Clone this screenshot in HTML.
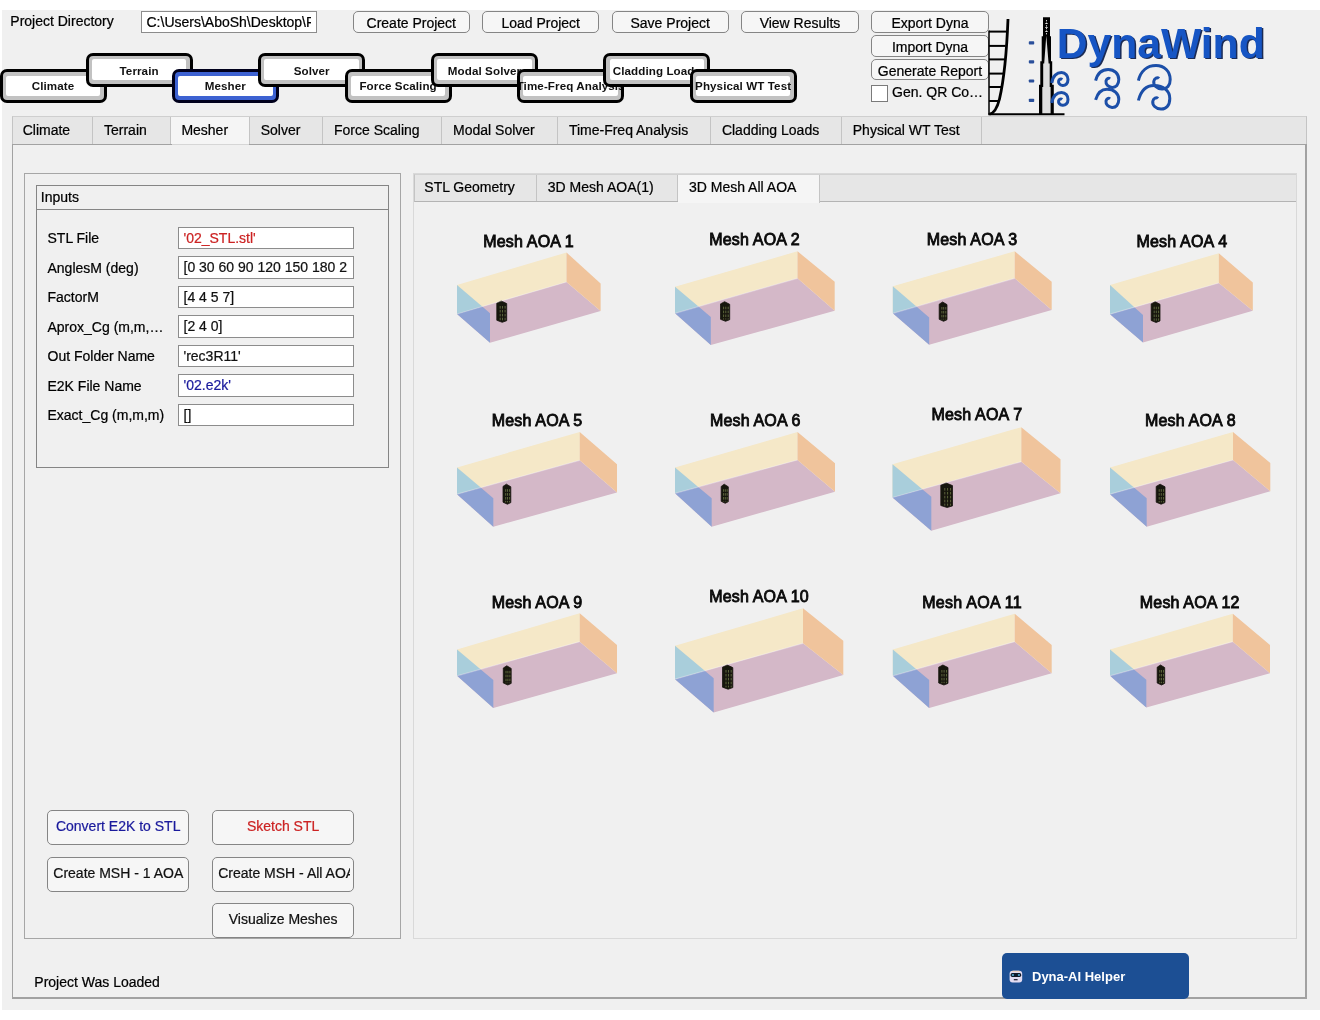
<!DOCTYPE html>
<html lang="en"><head><meta charset="utf-8"><title>DynaWind</title>
<style>
html,body{margin:0;padding:0;background:#fff;}
body{width:1320px;height:1020px;position:relative;overflow:hidden;font-family:"Liberation Sans",Arial,sans-serif;font-size:14px;color:#000;-webkit-text-stroke:0.22px currentColor;}
.a{position:absolute;box-sizing:border-box;white-space:nowrap;}
#bg{left:1.5px;top:10px;width:1318.5px;height:1000px;background:#f0f0f0;}
.t{line-height:16px;height:16px;}
.btn{border:1px solid #858585;border-radius:5px;background:#f6f6f6;text-align:center;overflow:hidden;}
.edit{border:1px solid #8c8c8c;background:#fff;overflow:hidden;padding-left:5px;}
.nav{border:3px solid #000;border-radius:7px;background:#c2c2c2;overflow:hidden;}
.nav i{position:absolute;left:3.2px;top:3.7px;right:3.2px;bottom:3.7px;background:#fff;border-radius:2px;}
.nav b{-webkit-text-stroke:0;position:absolute;left:0;right:0;top:1.6px;bottom:0;overflow:hidden;display:flex;align-items:center;justify-content:center;font-size:11.6px;letter-spacing:0.1px;font-weight:bold;font-style:normal;color:#111;}
.nav.sel{border-color:#00001c;background:#3d62d2;}
.tabbar{background:#e6e6e6;}
.tab{border-right:1px solid #c4c4c4;height:100%;top:0;}
.tabsel{background:#f5f5f5;}
#root{left:0;top:0;width:1320px;height:1020px;will-change:transform;}
</style></head><body>
<div class="a" id="root">
<div class="a" id="bg"></div>
<div class="a t" style="left:10.3px;top:12.8px;">Project Directory</div>
<div class="a edit" style="left:140.5px;top:11px;width:176.5px;height:21.5px;line-height:20px;"><span style="display:block;width:164px;overflow:hidden;">C:\Users\AboSh\Desktop\Projects</span></div>
<div class="a btn" style="left:352.7px;top:11.3px;width:117.2px;height:21.5px;line-height:23.5px;">Create Project</div>
<div class="a btn" style="left:482.1px;top:11.3px;width:117.2px;height:21.5px;line-height:23.5px;">Load Project</div>
<div class="a btn" style="left:611.6px;top:11.3px;width:117.2px;height:21.5px;line-height:23.5px;">Save Project</div>
<div class="a btn" style="left:741.4px;top:11.3px;width:117.2px;height:21.5px;line-height:23.5px;">View Results</div>
<div class="a btn" style="left:871px;top:11.3px;width:118px;height:21.5px;line-height:23.5px;">Export Dyna</div>
<div class="a btn" style="left:871px;top:35px;width:118px;height:21.5px;line-height:23.5px;">Import Dyna</div>
<div class="a btn" style="left:871px;top:58.5px;width:118px;height:21.5px;line-height:23.5px;">Generate Report</div>
<div class="a" style="left:871px;top:85.4px;width:16.6px;height:16.6px;border:1px solid #7a7a7a;background:#fff;"></div>
<div class="a t" style="left:892px;top:83.6px;">Gen. QR Co…</div>
<div class="a nav" style="left:-0.5px;top:69px;width:107px;height:34px;"><i></i><b style="top:-0.6px">Climate</b></div>
<div class="a nav" style="left:85.6px;top:52.8px;width:107px;height:34px;"><i></i><b style="top:1.6px">Terrain</b></div>
<div class="a nav sel" style="left:171.8px;top:69px;width:107px;height:34px;"><i></i><b style="top:-0.6px">Mesher</b></div>
<div class="a nav" style="left:258.2px;top:52.8px;width:107px;height:34px;"><i></i><b style="top:1.6px">Solver</b></div>
<div class="a nav" style="left:344.6px;top:69px;width:107px;height:34px;"><i></i><b style="top:-0.6px">Force Scaling</b></div>
<div class="a nav" style="left:431px;top:52.8px;width:107px;height:34px;"><i></i><b style="top:1.6px">Modal Solver</b></div>
<div class="a nav" style="left:517.2px;top:69px;width:107px;height:34px;"><i></i><b style="top:-0.6px">Time-Freq Analysis</b></div>
<div class="a nav" style="left:603.4px;top:52.8px;width:107px;height:34px;"><i></i><b style="top:1.6px">Cladding Loads</b></div>
<div class="a nav" style="left:689.6px;top:69px;width:107px;height:34px;"><i></i><b style="top:-0.6px">Physical WT Test</b></div>
<div class="a tabbar" style="left:12px;top:116.3px;width:1294.5px;height:28px;border-top:1px solid #cfcfcf;border-left:1px solid #c4c4c4;border-right:1px solid #c4c4c4;">
<div class="a tab" style="left:-1.0px;width:81.3px;"><span class="a t" style="left:10.7px;top:5px;">Climate</span></div>
<div class="a tab" style="left:80.3px;width:77.4px;"><span class="a t" style="left:10.7px;top:5px;">Terrain</span></div>
<div class="a tab tabsel" style="left:157.7px;width:79.3px;"><span class="a t" style="left:10.7px;top:5px;">Mesher</span></div>
<div class="a tab" style="left:237.0px;width:73.3px;"><span class="a t" style="left:10.7px;top:5px;">Solver</span></div>
<div class="a tab" style="left:310.3px;width:119.1px;"><span class="a t" style="left:10.7px;top:5px;">Force Scaling</span></div>
<div class="a tab" style="left:429.4px;width:115.8px;"><span class="a t" style="left:10.7px;top:5px;">Modal Solver</span></div>
<div class="a tab" style="left:545.2px;width:153.0px;"><span class="a t" style="left:10.7px;top:5px;">Time-Freq Analysis</span></div>
<div class="a tab" style="left:698.2px;width:130.9px;"><span class="a t" style="left:10.7px;top:5px;">Cladding Loads</span></div>
<div class="a tab" style="left:829.1px;width:140.3px;"><span class="a t" style="left:10.7px;top:5px;">Physical WT Test</span></div>
</div>
<div class="a" style="left:11.6px;top:143.6px;width:1295px;height:855.2px;border:1.6px solid #a2a2a2;border-right-width:2px;border-bottom-width:2px;"></div>
<div class="a" style="left:171.7px;top:143.6px;width:77.8px;height:1.6px;background:#d6d6d6;"></div>
<div class="a" style="left:23.7px;top:173.3px;width:377.3px;height:765.5px;border:1.4px solid #a6a6a6;border-right-width:1.7px;border-bottom-width:1.8px;"></div>
<div class="a" style="left:35.5px;top:185.3px;width:353.5px;height:282.8px;border:1.1px solid #858585;"></div>
<div class="a" style="left:35.5px;top:209.2px;width:353.3px;height:1.1px;background:#858585;"></div>
<div class="a t" style="left:40.8px;top:189.2px;">Inputs</div>
<div class="a t" style="left:47.5px;top:230.0px;">STL File</div><div class="a edit" style="left:177.5px;top:226.8px;width:176px;height:22.4px;line-height:21px;color:#cc2323;"><span style="display:block;width:164px;overflow:hidden;">'02_STL.stl'</span></div>
<div class="a t" style="left:47.5px;top:259.5px;">AnglesM (deg)</div><div class="a edit" style="left:177.5px;top:256.3px;width:176px;height:22.4px;line-height:21px;color:#111;"><span style="display:block;width:164px;overflow:hidden;">[0 30 60 90 120 150 180 210 240]</span></div>
<div class="a t" style="left:47.5px;top:289.0px;">FactorM</div><div class="a edit" style="left:177.5px;top:285.8px;width:176px;height:22.4px;line-height:21px;color:#111;"><span style="display:block;width:164px;overflow:hidden;">[4 4 5 7]</span></div>
<div class="a t" style="left:47.5px;top:318.5px;">Aprox_Cg (m,m,…</div><div class="a edit" style="left:177.5px;top:315.3px;width:176px;height:22.4px;line-height:21px;color:#111;"><span style="display:block;width:164px;overflow:hidden;">[2 4 0]</span></div>
<div class="a t" style="left:47.5px;top:348.0px;">Out Folder Name</div><div class="a edit" style="left:177.5px;top:344.8px;width:176px;height:22.4px;line-height:21px;color:#111;"><span style="display:block;width:164px;overflow:hidden;">'rec3R11'</span></div>
<div class="a t" style="left:47.5px;top:377.5px;">E2K File Name</div><div class="a edit" style="left:177.5px;top:374.3px;width:176px;height:22.4px;line-height:21px;color:#1a1a9c;"><span style="display:block;width:164px;overflow:hidden;">'02.e2k'</span></div>
<div class="a t" style="left:47.5px;top:407.0px;">Exact_Cg (m,m,m)</div><div class="a edit" style="left:177.5px;top:403.8px;width:176px;height:22.4px;line-height:21px;color:#111;"><span style="display:block;width:164px;overflow:hidden;">[]</span></div>
<div class="a btn" style="left:47.3px;top:810.2px;width:141.8px;height:35px;line-height:30.6px;color:#1a1a9c;">Convert E2K to STL</div>
<div class="a btn" style="left:212.2px;top:810.2px;width:141.8px;height:35px;line-height:30.6px;color:#cc2323;">Sketch STL</div>
<div class="a btn" style="left:47.3px;top:857.2px;width:141.8px;height:35px;line-height:30.6px;color:#111;"><span style="display:block;margin-left:5px;width:132px;overflow:hidden;text-align:left;">Create MSH - 1 AOA</span></div>
<div class="a btn" style="left:212.2px;top:857.2px;width:141.8px;height:35px;line-height:30.6px;color:#111;"><span style="display:block;margin-left:5px;width:132px;overflow:hidden;text-align:left;">Create MSH - All AOA</span></div>
<div class="a btn" style="left:212.2px;top:903.3px;width:141.8px;height:35px;line-height:30.6px;color:#111;">Visualize Meshes</div>
<div class="a t" style="left:34.3px;top:973.5px;">Project Was Loaded</div>
<div class="a" style="left:413.3px;top:173.3px;width:883.4px;height:766px;border:1px solid #d9d9d9;"></div>
<div class="a tabbar" style="left:413.8px;top:173.6px;width:882.4px;height:28px;border-top:1px solid #d2d2d2;border-bottom:1px solid #b4b4b4;border-left:1px solid #c4c4c4;">
<div class="a tab" style="left:-1.0px;width:123.5px;"><span class="a t" style="left:10.5px;top:4.5px;">STL Geometry</span></div>
<div class="a tab" style="left:122.5px;width:141.2px;"><span class="a t" style="left:10.5px;top:4.5px;">3D Mesh AOA(1)</span></div>
<div class="a tab tabsel" style="left:263.7px;width:141.3px;height:28px;"><span class="a t" style="left:10.5px;top:4.5px;">3D Mesh All AOA</span></div>
</div>
<div class="a" style="left:1001.5px;top:953px;width:187.3px;height:46px;background:#1c4f94;border-radius:5px;"></div>
<div class="a" style="left:1032px;top:968.5px;font-size:13px;font-weight:bold;color:#fff;line-height:16px;-webkit-text-stroke:0;">Dyna-AI Helper</div>
<svg class="a" style="left:1009px;top:970px;" width="14" height="13" viewBox="0 0 14 13">
<rect x="0.6" y="0.8" width="12.6" height="11.6" rx="3" fill="#e2dcf2"/>
<path d="M4 0.8 h6 a3 3 0 0 1 1.5 1.2 h-9 a3 3 0 0 1 1.500 -1.2z" fill="#f0d2c0"/>
<rect x="1.6" y="3.1" width="10.6" height="3.8" rx="1.6" fill="#101a2a"/>
<rect x="2.9" y="4" width="2" height="2" fill="#4a94b8"/><rect x="8.9" y="4" width="2" height="2" fill="#4a94b8"/>
<rect x="4.8" y="9.1" width="3.8" height="1.2" fill="#1a1a2a"/>
</svg>
<svg class="a" style="left:980px;top:10px;" width="300" height="112" viewBox="980 10 300 112">
<g fill="none" stroke="#000" stroke-width="2"><path d="M989 30.6V114.4" stroke-width="1.5"/><path d="M988.3 114.3H1064.5"/><path d="M989 31.6H1006.6"/><path d="M989 45.9H1005.6"/><path d="M989 59.4H1004.6"/><path d="M989 73.6H1003"/><path d="M989 87H1001.2"/><path d="M989 101H998.2"/></g><path d="M1008 19 C1007 45 1005 75 999.5 99 C997.5 107 995 113 989.5 114.2" fill="none" stroke="#000" stroke-width="2.8"/>
<rect x="1028.8" y="41.3" width="5.4" height="3.2" rx="0.8" fill="#2a4f9a"/><rect x="1028.8" y="60.199999999999996" width="5.4" height="3.2" rx="0.8" fill="#2a4f9a"/><rect x="1028.8" y="79.4" width="5.4" height="3.2" rx="0.8" fill="#2a4f9a"/><rect x="1028.8" y="98.80000000000001" width="5.4" height="3.2" rx="0.8" fill="#2a4f9a"/>
<path d="M1039 114.3V84.8H1040.3V61.2H1041.7V36.3H1043V17.3H1050V36.3H1051V61.2H1052.2V84.8H1053.8V114.3Z" fill="#000"/>
<path d="M1042.3 113.3V87H1043.2V63.5H1044.2L1046.3 35.5L1048.6 63.5H1049.7V87H1050.6V113.3Z" fill="#e0e0e0"/>
<path d="M1046.5 20V35" stroke="#e8e8e8" stroke-width="0.9" stroke-dasharray="1.4 1.2"/>
<path d="M1045.2 23.5H1047.8M1045.2 27.5H1047.8M1045.2 31.5H1047.8" stroke="#e8e8e8" stroke-width="0.8"/>
<text x="1058.2" y="59.4" font-family="Liberation Sans, Arial, sans-serif" font-weight="bold" font-size="42.6" fill="#1b2b55" textLength="208" lengthAdjust="spacingAndGlyphs">DynaWind</text>
<text x="1056.7" y="57.5" font-family="Liberation Sans, Arial, sans-serif" font-weight="bold" font-size="42.6" fill="#1655c4" textLength="208" lengthAdjust="spacingAndGlyphs">DynaWind</text>
<g fill="none" stroke="#1c4fa8" stroke-width="3" stroke-linecap="butt"><path d="M1051.8 83 C1052.5 76 1057 72.6 1061.5 72.6 C1065.6 72.6 1068 76 1068 79.6 C1068 83.6 1065.5 85.6 1062.6 85.4 C1059.8 85.2 1058.2 83 1058.6 81 C1059 79.2 1061 78.6 1062.2 79.6"/><path d="M1051.8 103 C1052.5 96 1057 92.4 1061.5 92.4 C1065.6 92.4 1068 95.8 1068 99.4 C1068 103.4 1065.5 105.4 1062.6 105.2 C1059.8 105 1058.2 102.8 1058.6 100.8 C1059 99 1061 98.4 1062.2 99.4"/><path d="M1095.6 80.6 C1097.4 73.5 1102 69.4 1108.2 69.4 C1114.6 69.4 1118.8 74 1118.8 79.6 C1118.8 84.6 1116 87.6 1112 87.4 C1108 87.2 1105.6 84.2 1106 81 C1106.4 78.6 1108.6 77.6 1110 78.8"/><path d="M1095.6 99.9 C1097.4 93.5 1101 89.2 1107 89.2 C1114 89.2 1118.8 93.5 1118.8 99.2 C1118.8 104.6 1116 107.6 1112 107.4 C1108 107.2 1105.6 104.2 1106 101 C1106.4 98.6 1108.6 97.6 1110 98.8"/><path d="M1138.4 80.6 C1140.6 71.5 1147 65.6 1156 65.6 C1164.4 65.6 1170.2 71.5 1170.2 79.4 C1170.2 85.6 1167 89.2 1162 89 C1156.5 88.8 1153.2 85 1153.8 81.2 C1154.4 78 1157.4 76.8 1159 78.6"/><path d="M1138.4 100.5 C1140.6 91.5 1146 85.4 1154 85.4 C1163.6 85.4 1169.8 91 1169.8 98.4 C1169.8 105.4 1166 109.2 1161 109 C1155.5 108.8 1152.2 105 1152.8 101.2 C1153.4 98 1156.4 96.8 1158 98.6"/></g></svg>
<svg class="a" style="left:415px;top:203px;" width="880" height="735" viewBox="415 203 880 735" font-family="Liberation Sans, Arial, sans-serif">
<defs><filter id="sb" x="-5%" y="-5%" width="110%" height="110%"><feGaussianBlur stdDeviation="0.45"/></filter></defs>
<g filter="url(#sb)"><polygon points="457.0,285.0 566.5,252.6 566.5,282.0 457.0,314.0" fill="#f5e8c8"/><polygon points="457.0,314.0 566.5,282.0 600.6,311.0 490.0,342.7" fill="#d4b8c8"/><polygon points="566.5,252.6 600.6,283.6 600.6,311.0 566.5,282.0" fill="#f0c49c"/><polygon points="457.0,285.0 482.2,306.6 457.0,314.0" fill="#a9cedb"/><polygon points="457.0,314.0 482.2,306.6 490.0,313.3 490.0,342.7" fill="#8ea2d4"/><path d="M496.8 303.2L501.2 301.0L506.7 303.6V320.7L502.2 322.3L496.8 320.3Z" fill="#17140e" stroke="#17140e" stroke-width="0.8" stroke-linejoin="round"/><path d="M500.2 306.0V320.5M502.5 306.0V320.5M505.1 306.0V320.5" stroke="#6c7848" stroke-width="0.8" stroke-dasharray="2.6 1.3" fill="none"/><path d="M457.0 314.0L566.5 282.0" stroke="#fff" stroke-opacity="0.28" stroke-width="1.2"/></g><text x="528.5" y="246.8" font-size="16" text-anchor="middle" fill="#0a0a0a" stroke="#0a0a0a" stroke-width="0.85" textLength="90.5" lengthAdjust="spacing">Mesh AOA 1</text>
<g filter="url(#sb)"><polygon points="675.0,286.7 797.5,251.3 797.5,278.3 675.0,313.3" fill="#f5e8c8"/><polygon points="675.0,313.3 797.5,278.3 834.7,310.8 710.8,345.0" fill="#d4b8c8"/><polygon points="797.5,251.3 834.7,281.7 834.7,310.8 797.5,278.3" fill="#f0c49c"/><polygon points="675.0,286.7 698.5,306.6 675.0,313.3" fill="#a9cedb"/><polygon points="675.0,313.3 698.5,306.6 710.8,317.0 710.8,345.0" fill="#8ea2d4"/><path d="M720.5 303.9L724.6 301.7L729.7 304.3V319.7L725.6 321.3L720.5 319.3Z" fill="#17140e" stroke="#17140e" stroke-width="0.8" stroke-linejoin="round"/><path d="M723.6 306.7V319.5M725.8 306.7V319.5M728.2 306.7V319.5" stroke="#6c7848" stroke-width="0.8" stroke-dasharray="2.6 1.3" fill="none"/><path d="M675.0 313.3L797.5 278.3" stroke="#fff" stroke-opacity="0.28" stroke-width="1.2"/></g><text x="754.5" y="244.8" font-size="16" text-anchor="middle" fill="#0a0a0a" stroke="#0a0a0a" stroke-width="0.85" textLength="90.5" lengthAdjust="spacing">Mesh AOA 2</text>
<g filter="url(#sb)"><polygon points="892.8,286.3 1014.7,251.3 1014.7,278.3 892.8,313.3" fill="#f5e8c8"/><polygon points="892.8,313.3 1014.7,278.3 1051.7,310.0 929.2,344.7" fill="#d4b8c8"/><polygon points="1014.7,251.3 1051.7,281.7 1051.7,310.0 1014.7,278.3" fill="#f0c49c"/><polygon points="892.8,286.3 916.4,306.5 892.8,313.3" fill="#a9cedb"/><polygon points="892.8,313.3 916.4,306.5 929.2,317.5 929.2,344.7" fill="#8ea2d4"/><path d="M939.2 304.2L942.6 302.0L947.0 304.6V319.7L943.6 321.3L939.2 319.3Z" fill="#17140e" stroke="#17140e" stroke-width="0.8" stroke-linejoin="round"/><path d="M941.9 307.0V319.5M943.7 307.0V319.5M945.8 307.0V319.5" stroke="#6c7848" stroke-width="0.8" stroke-dasharray="2.6 1.3" fill="none"/><path d="M892.8 313.3L1014.7 278.3" stroke="#fff" stroke-opacity="0.28" stroke-width="1.2"/></g><text x="972.0" y="244.8" font-size="16" text-anchor="middle" fill="#0a0a0a" stroke="#0a0a0a" stroke-width="0.85" textLength="90.5" lengthAdjust="spacing">Mesh AOA 3</text>
<g filter="url(#sb)"><polygon points="1110.0,285.0 1218.8,253.3 1218.8,283.0 1110.0,314.2" fill="#f5e8c8"/><polygon points="1110.0,314.2 1218.8,283.0 1252.8,310.8 1143.0,342.5" fill="#d4b8c8"/><polygon points="1218.8,253.3 1252.8,282.5 1252.8,310.8 1218.8,283.0" fill="#f0c49c"/><polygon points="1110.0,285.0 1134.4,307.2 1110.0,314.2" fill="#a9cedb"/><polygon points="1110.0,314.2 1134.4,307.2 1143.0,315.0 1143.0,342.5" fill="#8ea2d4"/><path d="M1151.2 303.9L1155.1 301.7L1160.0 304.3V320.9L1156.1 322.5L1151.2 320.5Z" fill="#17140e" stroke="#17140e" stroke-width="0.8" stroke-linejoin="round"/><path d="M1154.2 306.7V320.7M1156.3 306.7V320.7M1158.6 306.7V320.7" stroke="#6c7848" stroke-width="0.8" stroke-dasharray="2.6 1.3" fill="none"/><path d="M1110.0 314.2L1218.8 283.0" stroke="#fff" stroke-opacity="0.28" stroke-width="1.2"/></g><text x="1181.8" y="247.0" font-size="16" text-anchor="middle" fill="#0a0a0a" stroke="#0a0a0a" stroke-width="0.85" textLength="90.5" lengthAdjust="spacing">Mesh AOA 4</text>
<g filter="url(#sb)"><polygon points="457.0,467.5 579.7,432.0 579.7,460.3 457.0,494.2" fill="#f5e8c8"/><polygon points="457.0,494.2 579.7,460.3 617.0,492.5 493.3,526.7" fill="#d4b8c8"/><polygon points="579.7,432.0 617.0,464.2 617.0,492.5 579.7,460.3" fill="#f0c49c"/><polygon points="457.0,467.5 480.7,487.6 457.0,494.2" fill="#a9cedb"/><polygon points="457.0,494.2 480.7,487.6 493.3,498.3 493.3,526.7" fill="#8ea2d4"/><path d="M503.0 486.4L506.4 484.2L510.8 486.8V502.6L507.4 504.2L503.0 502.2Z" fill="#17140e" stroke="#17140e" stroke-width="0.8" stroke-linejoin="round"/><path d="M505.7 489.2V502.4M507.5 489.2V502.4M509.6 489.2V502.4" stroke="#6c7848" stroke-width="0.8" stroke-dasharray="2.6 1.3" fill="none"/><path d="M457.0 494.2L579.7 460.3" stroke="#fff" stroke-opacity="0.28" stroke-width="1.2"/></g><text x="537.0" y="425.8" font-size="16" text-anchor="middle" fill="#0a0a0a" stroke="#0a0a0a" stroke-width="0.85" textLength="90.5" lengthAdjust="spacing">Mesh AOA 5</text>
<g filter="url(#sb)"><polygon points="675.0,467.5 797.5,432.0 797.5,460.0 675.0,493.3" fill="#f5e8c8"/><polygon points="675.0,493.3 797.5,460.0 835.0,491.7 711.7,526.7" fill="#d4b8c8"/><polygon points="797.5,432.0 835.0,463.3 835.0,491.7 797.5,460.0" fill="#f0c49c"/><polygon points="675.0,467.5 698.2,487.0 675.0,493.3" fill="#a9cedb"/><polygon points="675.0,493.3 698.2,487.0 711.7,498.3 711.7,526.7" fill="#8ea2d4"/><path d="M721.2 486.4L724.2 484.2L728.3 486.8V501.7L725.2 503.3L721.2 501.3Z" fill="#17140e" stroke="#17140e" stroke-width="0.8" stroke-linejoin="round"/><path d="M723.6 489.2V501.5M725.3 489.2V501.5M727.2 489.2V501.5" stroke="#6c7848" stroke-width="0.8" stroke-dasharray="2.6 1.3" fill="none"/><path d="M675.0 493.3L797.5 460.0" stroke="#fff" stroke-opacity="0.28" stroke-width="1.2"/></g><text x="755.2" y="425.8" font-size="16" text-anchor="middle" fill="#0a0a0a" stroke="#0a0a0a" stroke-width="0.85" textLength="90.5" lengthAdjust="spacing">Mesh AOA 6</text>
<g filter="url(#sb)"><polygon points="892.5,464.2 1021.3,427.2 1021.3,461.7 892.5,497.5" fill="#f5e8c8"/><polygon points="892.5,497.5 1021.3,461.7 1060.5,493.3 931.3,530.8" fill="#d4b8c8"/><polygon points="1021.3,427.2 1060.5,459.2 1060.5,493.3 1021.3,461.7" fill="#f0c49c"/><polygon points="892.5,464.2 922.3,489.2 892.5,497.5" fill="#a9cedb"/><polygon points="892.5,497.5 922.3,489.2 931.3,496.7 931.3,530.8" fill="#8ea2d4"/><path d="M940.8 485.2L946.1 483.0L952.5 485.6V505.9L947.1 507.5L940.8 505.5Z" fill="#17140e" stroke="#17140e" stroke-width="0.8" stroke-linejoin="round"/><path d="M944.8 488.0V505.7M947.6 488.0V505.7M950.6 488.0V505.7" stroke="#6c7848" stroke-width="0.8" stroke-dasharray="2.6 1.3" fill="none"/><path d="M892.5 497.5L1021.3 461.7" stroke="#fff" stroke-opacity="0.28" stroke-width="1.2"/></g><text x="976.8" y="420.0" font-size="16" text-anchor="middle" fill="#0a0a0a" stroke="#0a0a0a" stroke-width="0.85" textLength="90.5" lengthAdjust="spacing">Mesh AOA 7</text>
<g filter="url(#sb)"><polygon points="1110.0,467.5 1233.0,432.0 1233.0,460.0 1110.0,494.2" fill="#f5e8c8"/><polygon points="1110.0,494.2 1233.0,460.0 1270.3,491.3 1146.7,526.7" fill="#d4b8c8"/><polygon points="1233.0,432.0 1270.3,463.0 1270.3,491.3 1233.0,460.0" fill="#f0c49c"/><polygon points="1110.0,467.5 1133.9,487.6 1110.0,494.2" fill="#a9cedb"/><polygon points="1110.0,494.2 1133.9,487.6 1146.7,498.3 1146.7,526.7" fill="#8ea2d4"/><path d="M1156.2 486.4L1160.1 484.2L1165.0 486.8V502.6L1161.1 504.2L1156.2 502.2Z" fill="#17140e" stroke="#17140e" stroke-width="0.8" stroke-linejoin="round"/><path d="M1159.2 489.2V502.4M1161.3 489.2V502.4M1163.6 489.2V502.4" stroke="#6c7848" stroke-width="0.8" stroke-dasharray="2.6 1.3" fill="none"/><path d="M1110.0 494.2L1233.0 460.0" stroke="#fff" stroke-opacity="0.28" stroke-width="1.2"/></g><text x="1190.3" y="425.8" font-size="16" text-anchor="middle" fill="#0a0a0a" stroke="#0a0a0a" stroke-width="0.85" textLength="90.5" lengthAdjust="spacing">Mesh AOA 8</text>
<g filter="url(#sb)"><polygon points="457.0,649.5 579.7,613.3 579.7,641.7 457.0,675.8" fill="#f5e8c8"/><polygon points="457.0,675.8 579.7,641.7 617.0,673.3 493.3,708.0" fill="#d4b8c8"/><polygon points="579.7,613.3 617.0,645.0 617.0,673.3 579.7,641.7" fill="#f0c49c"/><polygon points="457.0,649.5 480.5,669.3 457.0,675.8" fill="#a9cedb"/><polygon points="457.0,675.8 480.5,669.3 493.3,680.0 493.3,708.0" fill="#8ea2d4"/><path d="M503.3 668.0L506.8 665.8L511.2 668.4V683.4L507.8 685.0L503.3 683.0Z" fill="#17140e" stroke="#17140e" stroke-width="0.8" stroke-linejoin="round"/><path d="M506.0 670.8V683.2M507.9 670.8V683.2M509.9 670.8V683.2" stroke="#6c7848" stroke-width="0.8" stroke-dasharray="2.6 1.3" fill="none"/><path d="M457.0 675.8L579.7 641.7" stroke="#fff" stroke-opacity="0.28" stroke-width="1.2"/></g><text x="537.0" y="607.5" font-size="16" text-anchor="middle" fill="#0a0a0a" stroke="#0a0a0a" stroke-width="0.85" textLength="90.5" lengthAdjust="spacing">Mesh AOA 9</text>
<g filter="url(#sb)"><polygon points="675.0,645.8 803.0,608.3 803.0,643.3 675.0,679.2" fill="#f5e8c8"/><polygon points="675.0,679.2 803.0,643.3 843.3,675.0 713.7,712.5" fill="#d4b8c8"/><polygon points="803.0,608.3 843.3,640.8 843.3,675.0 803.0,643.3" fill="#f0c49c"/><polygon points="675.0,645.8 704.8,670.8 675.0,679.2" fill="#a9cedb"/><polygon points="675.0,679.2 704.8,670.8 713.7,678.3 713.7,712.5" fill="#8ea2d4"/><path d="M722.5 667.2L727.1 665.0L732.8 667.6V687.6L728.1 689.2L722.5 687.2Z" fill="#17140e" stroke="#17140e" stroke-width="0.8" stroke-linejoin="round"/><path d="M726.0 670.0V687.4M728.5 670.0V687.4M731.2 670.0V687.4" stroke="#6c7848" stroke-width="0.8" stroke-dasharray="2.6 1.3" fill="none"/><path d="M675.0 679.2L803.0 643.3" stroke="#fff" stroke-opacity="0.28" stroke-width="1.2"/></g><text x="759.0" y="601.6" font-size="16" text-anchor="middle" fill="#0a0a0a" stroke="#0a0a0a" stroke-width="0.85" textLength="99.5" lengthAdjust="spacing">Mesh AOA 10</text>
<g filter="url(#sb)"><polygon points="892.8,649.5 1014.7,613.7 1014.7,641.7 892.8,675.8" fill="#f5e8c8"/><polygon points="892.8,675.8 1014.7,641.7 1051.7,673.3 929.2,708.0" fill="#d4b8c8"/><polygon points="1014.7,613.7 1051.7,645.0 1051.7,673.3 1014.7,641.7" fill="#f0c49c"/><polygon points="892.8,649.5 916.3,669.2 892.8,675.8" fill="#a9cedb"/><polygon points="892.8,675.8 916.3,669.2 929.2,680.0 929.2,708.0" fill="#8ea2d4"/><path d="M938.7 667.2L942.9 665.0L948.0 667.6V683.4L943.9 685.0L938.7 683.0Z" fill="#17140e" stroke="#17140e" stroke-width="0.8" stroke-linejoin="round"/><path d="M941.9 670.0V683.2M944.1 670.0V683.2M946.5 670.0V683.2" stroke="#6c7848" stroke-width="0.8" stroke-dasharray="2.6 1.3" fill="none"/><path d="M892.8 675.8L1014.7 641.7" stroke="#fff" stroke-opacity="0.28" stroke-width="1.2"/></g><text x="972.0" y="607.5" font-size="16" text-anchor="middle" fill="#0a0a0a" stroke="#0a0a0a" stroke-width="0.85" textLength="99.5" lengthAdjust="spacing">Mesh AOA 11</text>
<g filter="url(#sb)"><polygon points="1110.0,649.5 1232.8,613.7 1232.8,641.7 1110.0,675.8" fill="#f5e8c8"/><polygon points="1110.0,675.8 1232.8,641.7 1270.0,673.3 1146.3,707.5" fill="#d4b8c8"/><polygon points="1232.8,613.7 1270.0,645.0 1270.0,673.3 1232.8,641.7" fill="#f0c49c"/><polygon points="1110.0,649.5 1133.7,669.2 1110.0,675.8" fill="#a9cedb"/><polygon points="1110.0,675.8 1133.7,669.2 1146.3,679.7 1146.3,707.5" fill="#8ea2d4"/><path d="M1157.2 667.2L1160.5 665.0L1164.7 667.6V683.4L1161.5 685.0L1157.2 683.0Z" fill="#17140e" stroke="#17140e" stroke-width="0.8" stroke-linejoin="round"/><path d="M1159.8 670.0V683.2M1161.5 670.0V683.2M1163.5 670.0V683.2" stroke="#6c7848" stroke-width="0.8" stroke-dasharray="2.6 1.3" fill="none"/><path d="M1110.0 675.8L1232.8 641.7" stroke="#fff" stroke-opacity="0.28" stroke-width="1.2"/></g><text x="1189.6" y="607.5" font-size="16" text-anchor="middle" fill="#0a0a0a" stroke="#0a0a0a" stroke-width="0.85" textLength="99.5" lengthAdjust="spacing">Mesh AOA 12</text>
</svg>
</div>
</body></html>
